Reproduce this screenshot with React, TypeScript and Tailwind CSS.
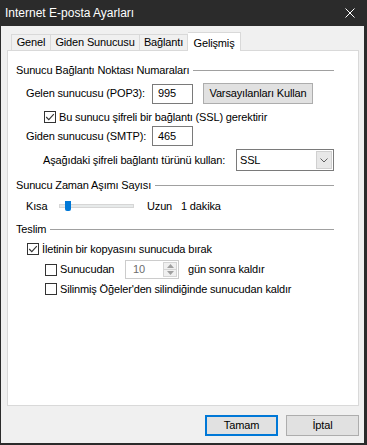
import React from "react";

const font = { fontFamily: '"Liberation Sans", Arial, sans-serif', letterSpacing: "-0.15px" };

function Check({ checked }: { checked?: boolean }) {
  return (
    <div className="w-[12px] h-[12px] border border-[#333333] bg-white flex items-center justify-center shrink-0">
      {checked && (
        <svg width="10" height="10" viewBox="0 0 10 10">
          <path d="M1.2 5 L3.8 7.6 L8.8 2.2" fill="none" stroke="#333333" strokeWidth="1.1" />
        </svg>
      )}
    </div>
  );
}

function Header({ title }: { title: string }) {
  return (
    <div className="flex items-center h-[14px] pl-[8px] pr-[24px]">
      <span className="whitespace-nowrap">{title}</span>
      <div className="flex-1 h-px bg-[#a0a0a0] ml-[4px]" />
    </div>
  );
}

export default function App() {
  return (
    <div
      className="w-[367px] h-[445px] bg-[#f0f0f0] text-[11px] text-black flex flex-col border-l border-r-[3px] border-b-2 border-[#2b2b2b] overflow-hidden whitespace-nowrap"
      style={font}
    >
      <div className="h-[26px] bg-[#2b2b2b] flex items-center justify-between pl-[4px] pr-[9px] shrink-0">
        <span className="text-white text-[12px] tracking-normal">Internet E-posta Ayarları</span>
        <svg width="10" height="10" viewBox="0 0 10 10">
          <path d="M0.5 0.5 L9.5 9.5 M9.5 0.5 L0.5 9.5" stroke="#ffffff" strokeWidth="1" />
        </svg>
      </div>

      <div className="flex flex-col pl-[6px] pr-[5px] pt-[6px] flex-1">
        <div className="flex items-end h-[18px] pl-[4px] relative z-10">
          <div className="w-[40px] h-[16px] flex items-center justify-center border border-b-0 border-[#d9d9d9] bg-[#f0f0f0]">Genel</div>
          <div className="w-[89px] h-[16px] flex items-center justify-center border border-b-0 border-l-0 border-[#d9d9d9] bg-[#f0f0f0]">Giden Sunucusu</div>
          <div className="w-[48px] h-[16px] flex items-center justify-center border border-b-0 border-l-0 border-[#d9d9d9] bg-[#f0f0f0]">Bağlantı</div>
          <div className="w-[53px] h-[19px] flex justify-center items-start pt-[2px] border border-b-0 border-l-0 border-[#d9d9d9] bg-white -mb-px">Gelişmiş</div>
        </div>
        <div className="h-[356px] bg-white border border-[#d9d9d9] flex flex-col pt-[12px]">
          <Header title="Sunucu Bağlantı Noktası Numaraları" />
          <div className="flex items-center h-[21px] mt-[6px] pl-[18px]">
            <span className="w-[126px]">Gelen sunucusu (POP3):</span>
            <div className="w-[41px] h-[20px] border border-[#7a7a7a] flex items-center px-[5px]">995</div>
            <div className="ml-[10px] w-[110px] h-[21px] bg-[#e1e1e1] border border-[#adadad] flex items-center justify-center">Varsayılanları Kullan</div>
          </div>
          <div className="flex items-center h-[12px] mt-[7px] pl-[36px]">
            <Check checked />
            <span className="ml-[3px]">Bu sunucu şifreli bir bağlantı (SSL) gerektirir</span>
          </div>
          <div className="flex items-center h-[20px] mt-[3px] pl-[18px]">
            <span className="w-[126px]">Giden sunucusu (SMTP):</span>
            <div className="w-[41px] h-[20px] border border-[#7a7a7a] flex items-center px-[5px]">465</div>
          </div>
          <div className="flex items-center h-[22px] mt-[3px] pl-[35px]">
            <span className="w-[193px]">Aşağıdaki şifreli bağlantı türünü kullan:</span>
            <div className="w-[98px] h-[22px] border border-[#7a7a7a] flex items-center pl-[3px] pr-[1px] justify-between">
              <span>SSL</span>
              <div className="w-[16px] h-[18px] bg-[#e8e8e8] border border-[#d0d0d0] flex items-center justify-center">
                <svg width="8" height="5" viewBox="0 0 8 5">
                  <path d="M0.5 0.5 L4 4 L7.5 0.5" fill="none" stroke="#606060" strokeWidth="1" />
                </svg>
              </div>
            </div>
          </div>
          <div className="mt-[7px]">
            <Header title="Sunucu Zaman Aşımı Sayısı" />
          </div>
          <div className="flex items-center h-[14px] mt-[7px] pl-[18px]">
            <span className="w-[33px]">Kısa</span>
            <div className="relative w-[75px] h-[4px] bg-[#e7eaea] border border-[#d6d6d6]">
              <div className="absolute left-[5px] -top-[4px] w-[6px] h-[10px] bg-[#0078d7] rounded-b-[2px]" />
            </div>
            <span className="ml-[13px] w-[34px]">Uzun</span>
            <span>1 dakika</span>
          </div>
          <div className="mt-[9px]">
            <Header title="Teslim" />
          </div>
          <div className="flex items-center h-[12px] mt-[7px] pl-[19px]">
            <Check checked />
            <span className="ml-[3px]">İletinin bir kopyasını sunucuda bırak</span>
          </div>
          <div className="flex items-center h-[19px] mt-[5px] pl-[37px]">
            <Check />
            <span className="ml-[3px] w-[65px]">Sunucudan</span>
            <div className="w-[54px] h-[19px] border border-[#cccccc] flex">
              <div className="flex-1 flex items-center pl-[7px] text-[#6d6d6d]">10</div>
              <div className="w-[16px] flex flex-col p-px">
                <div className="flex-1 bg-[#f0f0f0] border border-[#d4d4d4] flex items-center justify-center">
                  <svg width="7" height="4" viewBox="0 0 7 4"><path d="M0 4 L3.5 0 L7 4 Z" fill="#a0a0a0" /></svg>
                </div>
                <div className="flex-1 bg-[#f0f0f0] border border-t-0 border-[#d4d4d4] flex items-center justify-center">
                  <svg width="7" height="4" viewBox="0 0 7 4"><path d="M0 0 L3.5 4 L7 0 Z" fill="#a0a0a0" /></svg>
                </div>
              </div>
            </div>
            <span className="ml-[9px]">gün sonra kaldır</span>
          </div>
          <div className="flex items-center h-[12px] mt-[4px] pl-[37px]">
            <Check />
            <span className="ml-[3px]">Silinmiş Öğeler'den silindiğinde sunucudan kaldır</span>
          </div>
        </div>
        <div className="flex justify-end gap-[8px] mt-[9px]">
          <div className="w-[73px] h-[21px] bg-[#e1e1e1] border-2 border-[#0078d7] flex items-center justify-center">Tamam</div>
          <div className="w-[73px] h-[21px] bg-[#e1e1e1] border border-[#adadad] flex items-center justify-center">İptal</div>
        </div>
      </div>
    </div>
  );
}
